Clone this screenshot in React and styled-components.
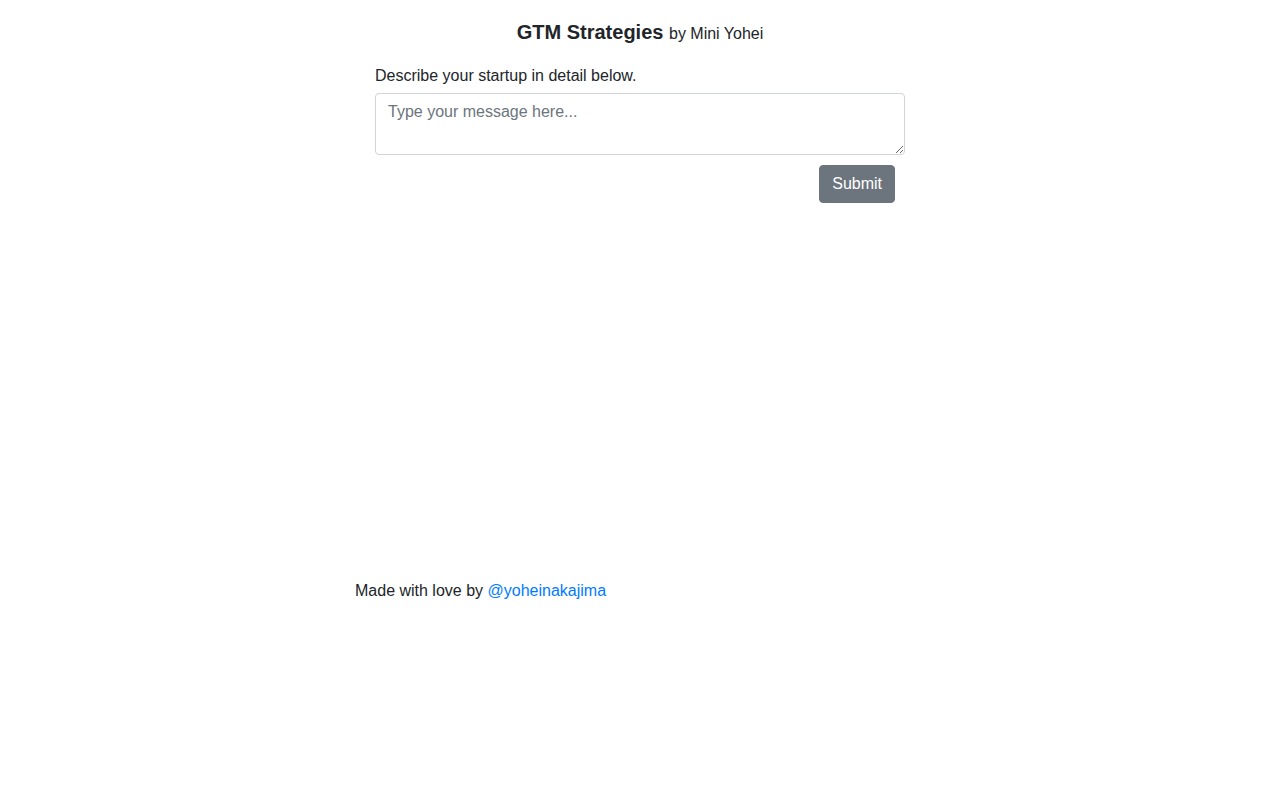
import styled, { createGlobalStyle } from "styled-components";

const GlobalStyle = createGlobalStyle`
  body {
    margin: 0;
    font-family: "Liberation Sans", Arial, sans-serif;
    font-size: 16px;
    line-height: 1.5;
    color: #212529;
    background: #fff;
  }
`;

const Page = styled.div`
  width: 570px;
  margin: 0 auto;
  padding-top: 20px;
`;

const Title = styled.h1`
  margin: 0 0 20px;
  text-align: center;
  font-size: 20px;
  font-weight: 700;
  line-height: 24px;
  height: 24px;

  small {
    font-size: 16px;
    font-weight: 400;
    line-height: 1;
  }
`;

const Form = styled.form`
  display: flex;
  flex-direction: column;
  padding: 0 20px;
`;

const Label = styled.label`
  display: block;
  margin-bottom: 5px;
  line-height: 24px;
`;

const TextArea = styled.textarea`
  box-sizing: border-box;
  width: 100%;
  height: 62px;
  padding: 6px 12px;
  font-family: inherit;
  font-size: 16px;
  line-height: 24px;
  color: #495057;
  border: 1px solid #ced4da;
  border-radius: 4px;
  resize: vertical;

  &::placeholder {
    color: #6c757d;
  }
`;

const Actions = styled.div`
  display: flex;
  justify-content: flex-end;
  margin-top: 10px;
  padding-right: 10px;
`;

const Button = styled.button`
  height: 38px;
  padding: 6px 12px;
  font-family: inherit;
  font-size: 16px;
  line-height: 24px;
  color: #fff;
  background: #6c757d;
  border: 1px solid #6c757d;
  border-radius: 4px;
  cursor: pointer;
`;

const Result = styled.div`
  min-height: 376px;
`;

const Footer = styled.footer`
  line-height: 24px;

  a {
    color: #007bff;
    text-decoration: none;
  }
`;

export default function App() {
  return (
    <>
      <GlobalStyle />
      <Page>
        <Title>
          GTM Strategies <small>by Mini Yohei</small>
        </Title>
        <Form onSubmit={(e) => e.preventDefault()}>
          <Label htmlFor="startup">Describe your startup in detail below.</Label>
          <TextArea id="startup" placeholder="Type your message here..." />
          <Actions>
            <Button type="submit">Submit</Button>
          </Actions>
        </Form>
        <Result />
        <Footer>
          Made with love by <a href="#">@yoheinakajima</a>
        </Footer>
      </Page>
    </>
  );
}
